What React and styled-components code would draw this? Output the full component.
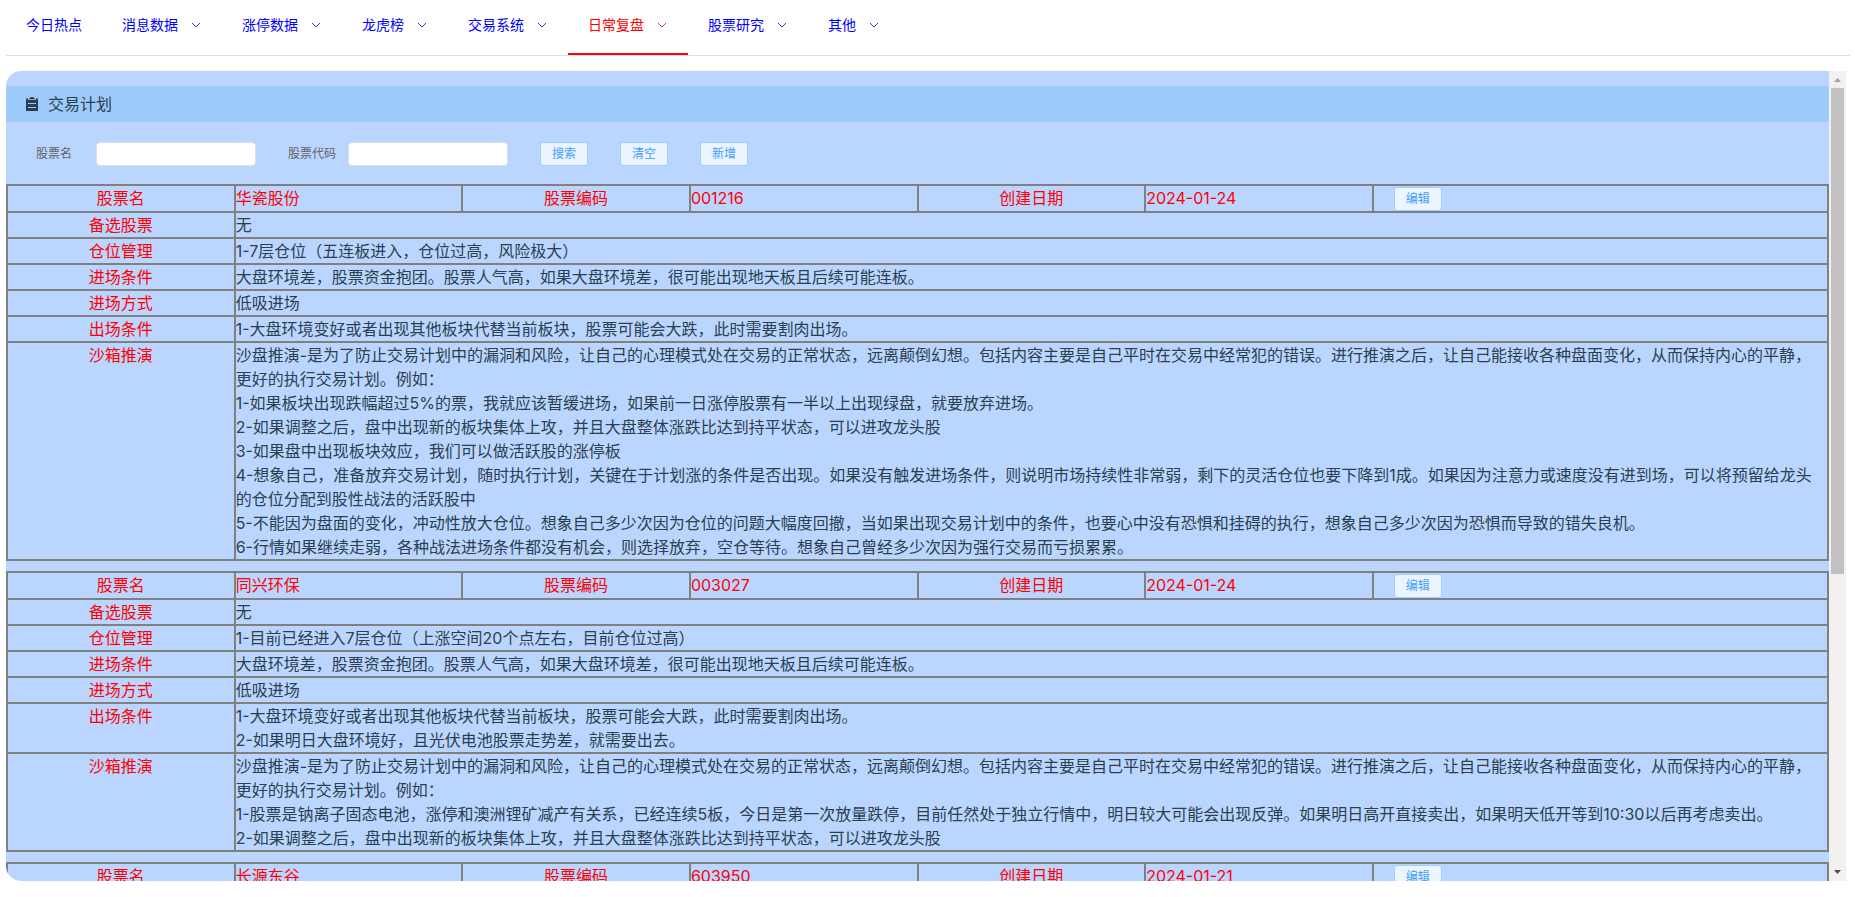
import React from 'react';
import styled, { createGlobalStyle } from 'styled-components';

const GlobalStyle = createGlobalStyle`
  * {
    box-sizing: border-box;
  }

  body {
    margin: 0;
    background: #fff;
    color: #2c3e50;
    font-family: Inter, 'Noto Sans CJK SC', sans-serif;
    font-size: 16px;
    font-weight: 400;
    line-height: 24px;
  }

  button,
  input {
    font: inherit;
  }
`;

const Page = styled.div`
  padding: 0 5px 0 6px;
`;

const NavBar = styled.nav`
  display: flex;
  border-bottom: 1px solid #dcdfe6;
  margin-bottom: 15px;
`;

const NavLink = styled.a`
  display: flex;
  align-items: center;
  gap: 12px;
  height: 55px;
  padding: 0 20px 3px;
  border-bottom: 2px solid ${({ $active }) => ($active ? '#f00' : 'transparent')};
  color: ${({ $active }) => ($active ? '#f00' : '#00f')};
  font-size: 14px;
  text-decoration: none;
`;

const Panel = styled.main`
  display: flex;
  height: calc(100vh - 87px);
  margin-right: 4px;
`;

const Content = styled.div`
  flex: 1;
  min-width: 0;
  padding-top: 15px;
  overflow-y: auto;
  scrollbar-width: none;
  border-radius: 15px 0 0 15px;
  background: #bad6ff;
`;

const PanelTitle = styled.h1`
  display: flex;
  align-items: center;
  gap: 8px;
  height: 36px;
  margin: 0;
  padding-left: 18px;
  background: #9ccafb;
  font-size: 16px;
  font-weight: inherit;
`;

const SearchForm = styled.form`
  display: flex;
  align-items: center;
  gap: 32px;
  padding: 20px 30px 18px;
`;

const Field = styled.label`
  display: grid;
  grid-template-columns: 48px 160px;
  gap: 12px;
  align-items: center;
  color: #606266;
  font-size: 12px;
`;

const TextInput = styled.input`
  width: 100%;
  height: 24px;
  padding: 0 8px;
  border: 1px solid #dcdfe6;
  border-radius: 4px;
  background: #fff;
  color: #606266;
  outline: none;
`;

const PlainButton = styled.button`
  display: block;
  width: 48px;
  height: 24px;
  padding: 0;
  border: 1px solid #a0cfff;
  border-radius: 3px;
  background: #ecf5ff;
  color: #409eff;
  font-size: 12px;
  line-height: 22px;
  cursor: pointer;
`;

const PlanTable = styled.table`
  width: 100%;
  margin-bottom: 10px;
  table-layout: fixed;
  border-collapse: collapse;

  th,
  td {
    height: 26px;
    padding: 0;
    border: 2px solid #808080;
    vertical-align: top;
  }

  th {
    color: #f00;
    font-weight: inherit;
    text-align: center;
  }
`;

const HeadRow = styled.tr`
  && > * {
    height: 27px;
  }
`;

const HeadValue = styled.td`
  color: #f00;
`;

const EditCell = styled.td`
  && {
    padding: 1px 0 0 20px;
  }
`;

const TextCell = styled.td`
  && {
    padding-right: 4px;
  }
  white-space: pre-line;
`;

const ScrollTrack = styled.div`
  display: flex;
  flex-direction: column;
  align-items: center;
  width: 17px;
  background: #f1f1f1;
`;

const ScrollThumb = styled.div`
  width: 13px;
  height: 60%;
  margin-bottom: auto;
  background: #c1c1c1;
`;

const navItems = [
  { label: '今日热点' },
  { label: '消息数据', menu: true },
  { label: '涨停数据', menu: true },
  { label: '龙虎榜', menu: true },
  { label: '交易系统', menu: true },
  { label: '日常复盘', menu: true, active: true },
  { label: '股票研究', menu: true },
  { label: '其他', menu: true },
];

const sandboxIntro =
  '沙盘推演-是为了防止交易计划中的漏洞和风险，让自己的心理模式处在交易的正常状态，远离颠倒幻想。包括内容主要是自己平时在交易中经常犯的错误。进行推演之后，让自己能接收各种盘面变化，从而保持内心的平静，更好的执行交易计划。例如：';

const plans = [
  {
    name: '华瓷股份',
    code: '001216',
    date: '2024-01-24',
    rows: [
      ['备选股票', '无'],
      ['仓位管理', '1-7层仓位（五连板进入，仓位过高，风险极大）'],
      ['进场条件', '大盘环境差，股票资金抱团。股票人气高，如果大盘环境差，很可能出现地天板且后续可能连板。'],
      ['进场方式', '低吸进场'],
      ['出场条件', '1-大盘环境变好或者出现其他板块代替当前板块，股票可能会大跌，此时需要割肉出场。'],
      [
        '沙箱推演',
        [
          sandboxIntro,
          '1-如果板块出现跌幅超过5%的票，我就应该暂缓进场，如果前一日涨停股票有一半以上出现绿盘，就要放弃进场。',
          '2-如果调整之后，盘中出现新的板块集体上攻，并且大盘整体涨跌比达到持平状态，可以进攻龙头股',
          '3-如果盘中出现板块效应，我们可以做活跃股的涨停板',
          '4-想象自己，准备放弃交易计划，随时执行计划，关键在于计划涨的条件是否出现。如果没有触发进场条件，则说明市场持续性非常弱，剩下的灵活仓位也要下降到1成。如果因为注意力或速度没有进到场，可以将预留给龙头的仓位分配到股性战法的活跃股中',
          '5-不能因为盘面的变化，冲动性放大仓位。想象自己多少次因为仓位的问题大幅度回撤，当如果出现交易计划中的条件，也要心中没有恐惧和挂碍的执行，想象自己多少次因为恐惧而导致的错失良机。',
          '6-行情如果继续走弱，各种战法进场条件都没有机会，则选择放弃，空仓等待。想象自己曾经多少次因为强行交易而亏损累累。',
        ].join('\n'),
      ],
    ],
  },
  {
    name: '同兴环保',
    code: '003027',
    date: '2024-01-24',
    rows: [
      ['备选股票', '无'],
      ['仓位管理', '1-目前已经进入7层仓位（上涨空间20个点左右，目前仓位过高）'],
      ['进场条件', '大盘环境差，股票资金抱团。股票人气高，如果大盘环境差，很可能出现地天板且后续可能连板。'],
      ['进场方式', '低吸进场'],
      [
        '出场条件',
        [
          '1-大盘环境变好或者出现其他板块代替当前板块，股票可能会大跌，此时需要割肉出场。',
          '2-如果明日大盘环境好，且光伏电池股票走势差，就需要出去。',
        ].join('\n'),
      ],
      [
        '沙箱推演',
        [
          sandboxIntro,
          '1-股票是钠离子固态电池，涨停和澳洲锂矿减产有关系，已经连续5板，今日是第一次放量跌停，目前任然处于独立行情中，明日较大可能会出现反弹。如果明日高开直接卖出，如果明天低开等到10:30以后再考虑卖出。',
          '2-如果调整之后，盘中出现新的板块集体上攻，并且大盘整体涨跌比达到持平状态，可以进攻龙头股',
        ].join('\n'),
      ],
    ],
  },
  {
    name: '长源东谷',
    code: '603950',
    date: '2024-01-21',
    rows: [],
  },
];

const ChevronDown = () => (
  <svg width="12" height="12" viewBox="0 0 12 12" fill="none" stroke="currentColor" strokeWidth="0.8" aria-hidden="true">
    <path d="M2 4l4 4 4-4" />
  </svg>
);

const ClipboardIcon = () => (
  <svg width="16" height="16" viewBox="0 0 16 16" fill="currentColor" aria-hidden="true">
    <path
      fillRule="evenodd"
      d="M2 2.500h2V4h8V2.500h2V15H2zM4 7v1h8V7zM4 11v1h8v-1z"
    />
    <path d="M5 2h1.500V1h3v1H11v1.200H5z" />
  </svg>
);

const ScrollArrow = ({ up }) => (
  <svg width="17" height="17" viewBox="0 0 17 17" aria-hidden="true">
    {up ? <path d="M5 11h7L8.500 7z" fill="#a3a3a3" /> : <path d="M5 6h7L8.500 10z" fill="#505050" />}
  </svg>
);

const Plan = ({ plan }) => (
  <PlanTable>
    <tbody>
      <HeadRow>
        <th scope="row">股票名</th>
        <HeadValue>{plan.name}</HeadValue>
        <th scope="row">股票编码</th>
        <HeadValue>{plan.code}</HeadValue>
        <th scope="row">创建日期</th>
        <HeadValue>{plan.date}</HeadValue>
        <EditCell colSpan={2}>
          <PlainButton type="button">编辑</PlainButton>
        </EditCell>
      </HeadRow>
      {plan.rows.map(([label, text]) => (
        <tr key={label}>
          <th scope="row">{label}</th>
          <TextCell colSpan={7}>{text}</TextCell>
        </tr>
      ))}
    </tbody>
  </PlanTable>
);

const App = () => (
  <>
    <GlobalStyle />
    <Page>
      <NavBar>
        {navItems.map((item) => (
          <NavLink key={item.label} href="#" $active={item.active}>
            {item.label}
            {item.menu && <ChevronDown />}
          </NavLink>
        ))}
      </NavBar>

      <Panel>
        <Content>
          <PanelTitle>
            <ClipboardIcon />
            交易计划
          </PanelTitle>
          <SearchForm onSubmit={(e) => e.preventDefault()}>
            <Field>
              股票名
              <TextInput type="text" name="name" />
            </Field>
            <Field>
              股票代码
              <TextInput type="text" name="code" />
            </Field>
            <PlainButton type="submit">搜索</PlainButton>
            <PlainButton type="reset">清空</PlainButton>
            <PlainButton type="button">新增</PlainButton>
          </SearchForm>
          {plans.map((plan) => (
            <Plan key={plan.code} plan={plan} />
          ))}
        </Content>
        <ScrollTrack>
          <ScrollArrow up />
          <ScrollThumb />
          <ScrollArrow />
        </ScrollTrack>
      </Panel>
    </Page>
  </>
);

export default App;
